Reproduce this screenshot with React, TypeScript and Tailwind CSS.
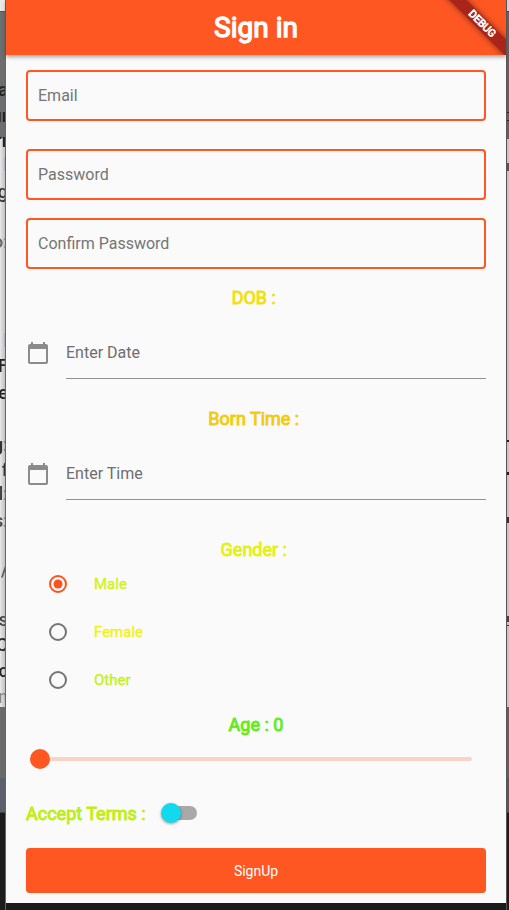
import React from "react";

const heading = "flex h-6 items-center justify-center whitespace-pre text-[18px] leading-6 [-webkit-text-stroke:0.9px_currentColor]";

function Field({ label, gap }: { label: string; gap: string }) {
  return (
    <div className={`flex h-[51px] shrink-0 items-center rounded-[4px] border-2 border-[#ff5722] pl-[10px] text-[16px] text-[#757575] ${gap}`}>
      {label}
    </div>
  );
}

function PickerRow({ label, gap }: { label: string; gap: string }) {
  return (
    <div className={`flex h-[52px] shrink-0 gap-4 ${gap}`}>
      <svg viewBox="0 0 24 24" className="mt-[14px] size-6 shrink-0 fill-[#8b8b8b]">
        <path d="M20 3h-1V1h-2v2H7V1H5v2H4c-1.1 0-2 .9-2 2v16c0 1.1.9 2 2 2h16c1.1 0 2-.9 2-2V5c0-1.1-.9-2-2-2zm0 18H4V8h16v13z" />
      </svg>
      <div className="flex flex-1 items-center border-b border-[#929292] text-[16px] text-[#6e6e6e]">{label}</div>
    </div>
  );
}

function RadioRow({ label, color, on }: { label: string; color: string; on?: boolean }) {
  return (
    <div className="flex h-12 items-center pl-5">
      <svg viewBox="0 0 24 24" className={`size-6 ${on ? "text-[#f9531f]" : "text-[#747474]"}`}>
        <circle cx="12" cy="12" r="8" fill="none" stroke="currentColor" strokeWidth="2" />
        {on && <circle cx="12" cy="12" r="4.5" fill="currentColor" />}
      </svg>
      <span className={`ml-6 text-[15px] [-webkit-text-stroke:0.4px_currentColor] ${color}`}>{label}</span>
    </div>
  );
}

const leftText = [
  { t: "Da", y: "top-[80px]", c: "text-[#222]" },
  { t: "ur", y: "top-[106px]", c: "text-[#222]" },
  { t: "rr", y: "top-[131px]", c: "text-[#222]" },
  { t: "l", y: "top-[155px]", c: "text-[#77779c]" },
  { t: "ig", y: "top-[182px]", c: "text-[#333]" },
  { t: "o:", y: "top-[232px]", c: "text-[#666]" },
  { t: "l", y: "top-[331px]", c: "text-[#77779c]" },
  { t: "F", y: "top-[356px]", c: "text-[#222]" },
  { t: "e", y: "top-[383px]", c: "text-[#222]" },
  { t: "g:", y: "top-[435px]", c: "text-[#333]" },
  { t: "f", y: "top-[460px]", c: "text-[#333]" },
  { t: "d:", y: "top-[484px]", c: "text-[#444]" },
  { t: "s:", y: "top-[511px]", c: "text-[#444]" },
  { t: "/", y: "top-[560px]", c: "text-[#555]" },
  { t: "is", y: "top-[610px]", c: "text-[#444]" },
  { t: "C", y: "top-[635px]", c: "text-[#222]" },
  { t: "c", y: "top-[661px]", c: "text-[#222]" },
  { t: "n", y: "top-[687px]", c: "text-[#888]" },
];

export default function App() {
  return (
    <div className="flex h-[910px] w-[509px] overflow-hidden bg-[#1c1c1c] font-['Roboto',sans-serif]">
      <div className="relative flex w-[6px] shrink-0 flex-col overflow-hidden border-r border-[#666]">
        <div className="h-[11px] bg-[#e8e8e8]" />
        <div className="h-[127px] border-t border-[#555] bg-[#6b6d6e]" />
        <div className="h-[569px] bg-linear-to-r from-[#e8e8e8] to-[#c0c0c0]" />
        <div className="h-[71px] bg-[#6a6a6a]" />
        <div className="h-[35px] border-b border-[#444] bg-[#5c606c]" />
        <div className="flex-1 bg-[#1c1c1c]" />
        {leftText.map((l) => (
          <span key={l.y} className={`absolute right-[-3px] text-[18px] leading-5 font-medium blur-[0.6px] ${l.y} ${l.c}`}>{l.t}</span>
        ))}
      </div>

      <main className="flex h-[903px] w-[500px] shrink-0 flex-col bg-[#fafafa]">
        <header className="relative flex h-[55px] shrink-0 items-center justify-center bg-[#ff5722] shadow-[0_2px_4px_rgba(0,0,0,0.35)]">
          <h1 className="text-[28px] leading-8 text-white [-webkit-text-stroke:1.3px_currentColor]">Sign in</h1>
          <div className="absolute top-0 right-0 h-[55px] w-[70px] overflow-hidden">
            <div className="absolute top-[18px] left-[-4px] flex h-3 w-[100px] rotate-45 items-center justify-center bg-[#a9241b] text-[10.5px] leading-3 text-white shadow-[0_0_6px_rgba(0,0,0,0.5)] [-webkit-text-stroke:0.7px_white]">
              DEBUG
            </div>
          </div>
        </header>

        <div className="flex flex-1 flex-col px-5 pt-[15px]">
          <Field label="Email" gap="" />
          <Field label="Password" gap="mt-7" />
          <Field label="Confirm Password" gap="mt-[18px]" />

          <div className={`${heading} mt-[17px] text-[#f2df12]`}>{"DOB : "}</div>
          <PickerRow label="Enter Date" gap="mt-[17px]" />
          <div className={`${heading} mt-[28px] text-[#f2cb0f]`}>{"Born Time : "}</div>
          <PickerRow label="Enter Time" gap="mt-[17px]" />
          <div className={`${heading} mt-[38px] text-[#e4f20c]`}>{"Gender : "}</div>

          <div className="mt-[-2px] flex flex-col">
            <RadioRow label="Male" color="text-[#d5f216]" on />
            <RadioRow label="Female" color="text-[#f2f216]" />
            <RadioRow label="Other" color="text-[#c3f11c]" />
          </div>

          <div className={`${heading} mt-[9px] text-[#63ec18]`}>Age : 0</div>
          <div className="mt-3 flex h-5 items-center pr-[14px] pl-1">
            <div className="size-5 shrink-0 rounded-full bg-[#ff5722]" />
            <div className="h-1 flex-1 rounded-r-full bg-[#fad2c6]" />
          </div>

          <div className="mt-[32px] flex h-6 items-center text-[18px] text-[#bfee13]">
            <span className="[-webkit-text-stroke:0.9px_currentColor]">Accept Terms :</span>
            <div className="ml-[17px] flex h-[14px] w-[34px] items-center rounded-full bg-[#a9a9a9]">
              <div className="-ml-[2px] size-5 rounded-full bg-[#12d9ee] shadow-[0_1px_3px_rgba(0,0,0,0.4)]" />
            </div>
          </div>
          <button className="mt-[23px] flex h-[45px] shrink-0 items-center justify-center rounded-[4px] bg-[#ff5722] pt-px text-[14px] text-white shadow-[0_0_1px_rgba(0,0,0,0.2)]">SignUp</button>
        </div>
      </main>

      <div className="relative flex w-[3px] shrink-0 flex-col overflow-hidden border-l border-[#555]">
        <div className="h-[11px] bg-[#d2d2d2]" />
        <div className="h-[128px] border-t border-[#444] bg-[#606060]" />
        <div className="h-[568px] bg-[#c4c4c4]" />
        <div className="h-[71px] bg-[#606060]" />
        <div className="h-[35px] border-b border-[#444] bg-[#535762]" />
        <div className="flex-1 bg-[#1c1c1c]" />
        <span className="absolute top-[112px] h-px w-[2px] bg-[#222]" />
        <span className="absolute top-[120px] h-px w-[2px] bg-[#222]" />
        <span className="absolute top-[163px] h-[8px] w-[2px] bg-[#555]" />
        <span className="absolute top-[440px] h-[2px] w-[2px] bg-[#222]" />
        <span className="absolute top-[472px] h-[3px] w-[2px] bg-[#222]" />
        <span className="absolute top-[517px] h-[6px] w-[2px] bg-[#333]" />
        <span className="absolute top-[616px] h-[6px] w-[2px] bg-[#444]" />
        <span className="absolute top-[625px] h-px w-[2px] bg-[#333]" />
      </div>
    </div>
  );
}
